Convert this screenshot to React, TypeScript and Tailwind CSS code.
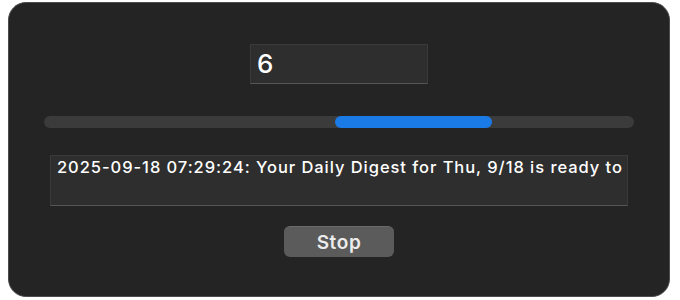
export default function App() {
  return (
    <div className="w-[680px] h-[300px] bg-white pl-[8px] pt-[2px]" style={{ fontFamily: 'Inter, "Liberation Sans", sans-serif' }}>
      <div className="w-[662px] h-[295px] rounded-[18px] border border-[#4d4d4d] bg-[#242424] flex flex-col items-center">
        {/* number field */}
        <div className="mt-[41px] w-[178px] h-[40px] bg-[#2e2e2e] border border-[#3a3a3a] border-b-[#555] flex items-center px-[6px]">
          <span className="text-[26px] text-white leading-none font-medium">6</span>
        </div>

        {/* indeterminate progress */}
        <div className="mt-[32px] w-[590px] h-[12px] rounded-full bg-[#3b3b3b] relative">
          <div className="absolute left-[291px] top-0 h-[12px] w-[157px] rounded-full bg-[#1a7be6]" />
        </div>

        {/* log */}
        <div className="mt-[27px] w-[578px] h-[51px] bg-[#2e2e2e] border border-[#3a3a3a] border-b-[#555] pl-[6px] pr-[1px] pt-[1px]">
          <p className="text-[16.5px] text-white font-medium tracking-[0.95px] leading-[20px] whitespace-nowrap">
            2025-09-18 07:29:24: Your Daily Digest for Thu, 9/18 is ready to
          </p>
        </div>

        {/* button */}
        <button className="mt-[20px] w-[110px] h-[31px] rounded-[6px] bg-[#5b5b5b] border-t border-[#6a6a6a] text-[#ececec] text-[19px] font-semibold tracking-[0.6px] leading-none">
          Stop
        </button>
      </div>
    </div>
  )
}
